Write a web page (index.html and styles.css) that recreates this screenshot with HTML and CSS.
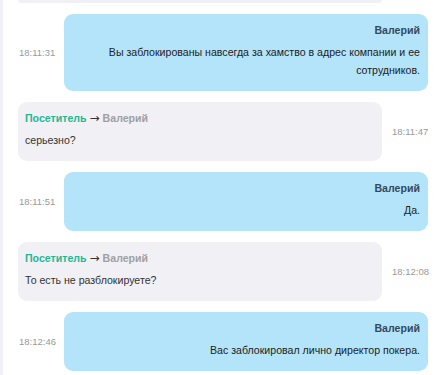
FILE: index.html
```html
<!DOCTYPE html>
<html lang="ru">
  <head>
    <meta charset="UTF-8" />
    <meta name="viewport" content="width=device-width, initial-scale=1.0" />
    <title>Чат</title>
    <link rel="stylesheet" href="styles.css">
  </head>
  <body>
    <div class="chat">
      <div class="row visitor">
        <div class="bubble stub"></div>
      </div>

      <div class="row agent">
        <div class="time">18:11:31</div>
        <div class="bubble">
          <div class="name">Валерий</div>
          <div class="text">Вы заблокированы навсегда за хамство в адрес компании и ее сотрудников.</div>
        </div>
      </div>

      <div class="row visitor">
        <div class="bubble">
          <div class="name"><span class="from">Посетитель</span> <span class="arrow">→</span> <span class="to">Валерий</span></div>
          <div class="text">серьезно?</div>
        </div>
        <div class="time">18:11:47</div>
      </div>

      <div class="row agent">
        <div class="time">18:11:51</div>
        <div class="bubble">
          <div class="name">Валерий</div>
          <div class="text">Да.</div>
        </div>
      </div>

      <div class="row visitor">
        <div class="bubble">
          <div class="name"><span class="from">Посетитель</span> <span class="arrow">→</span> <span class="to">Валерий</span></div>
          <div class="text">То есть не разблокируете?</div>
        </div>
        <div class="time">18:12:08</div>
      </div>

      <div class="row agent">
        <div class="time">18:12:46</div>
        <div class="bubble">
          <div class="name">Валерий</div>
          <div class="text">Вас заблокировал лично директор покера.</div>
        </div>
      </div>
    </div>
  </body>
</html>
```

FILE: styles.css
```css
html, body {
  margin: 0;
  padding: 0;
  background-color: #fff;
  overflow: hidden;
}

body {
  font-family: "Liberation Sans", Arial, sans-serif;
  font-size: 10.6px;
  color: #333;
  border-left: 3px solid #f0f1f6;
  height: 375px;
  box-sizing: border-box;
}

.chat {
  display: flex;
  flex-direction: column;
  gap: 11px;
  padding: 0 15px;
}

.row {
  display: flex;
  align-items: center;
}

.bubble {
  flex-shrink: 0;
  width: 364px;
  box-sizing: border-box;
  padding: 7px 8px 12px 7px;
  border-radius: 9px;
  line-height: 18px;
}

.bubble.stub {
  height: 3px;
  padding: 0;
  border-radius: 0 0 9px 9px;
}

.name {
  margin-bottom: 4px;
}

.visitor .bubble {
  background-color: #f0f0f5;
}

.visitor .time {
  margin-left: 9px;
}

.agent .bubble {
  background-color: #b3e4fa;
  margin-left: auto;
  text-align: right;
}

.agent .name {
  font-weight: bold;
  color: #34495e;
}

.agent .text {
  color: #222;
}

.from {
  color: #1fb894;
  font-weight: bold;
}

.arrow {
  font-family: "DejaVu Sans", sans-serif;
  font-size: 12px;
  color: #333;
}

.to {
  color: #a0a0a0;
  font-weight: bold;
}

.time {
  font-size: 9.5px;
  color: #999;
  padding-left: 1px;
}
```
